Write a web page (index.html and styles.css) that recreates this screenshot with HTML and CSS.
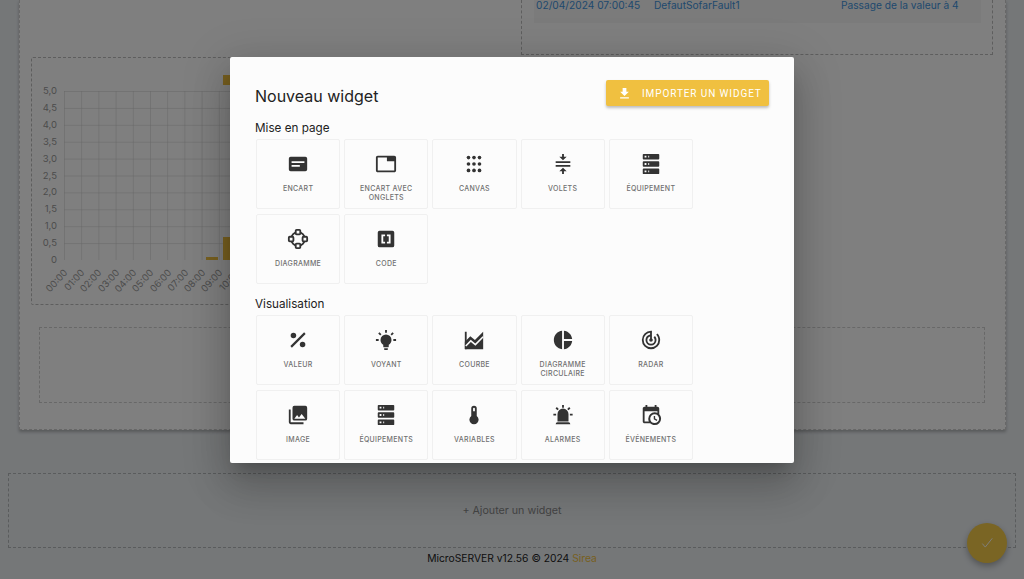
FILE: index.html
```html
<!DOCTYPE html>
<html lang="fr">
<head>
  <meta charset="UTF-8">
  <title>MicroSERVER</title>
  <link rel="stylesheet" href="styles.css">
</head>
<body>
  <div class="dashboard">
    <div class="panel">
      <div class="panel-row">
        <div class="chart-col">
          <div class="widget chart-box">
            <svg class="chart" width="480" height="246" viewBox="0 0 480 246">
              <defs>
                <pattern id="grid" x="32" y="33" width="17.2" height="16.9" patternUnits="userSpaceOnUse">
                  <path d="M0 0H17.2M0 0V16.9" fill="none" stroke="#cfcfcf" stroke-width="1"/>
                </pattern>
              </defs>
              <rect x="32" y="33" width="206" height="169" fill="url(#grid)"/>
              <rect x="174" y="199" width="12" height="3" fill="#f0c040"/>
              <rect x="191" y="179" width="12" height="23" fill="#f0c040"/>
              <rect x="191" y="17" width="12" height="10" fill="#f0c040"/>
              <g class="y-labels" text-anchor="end">
                <text x="25" y="36">5,0</text>
                <text x="25" y="53">4,5</text>
                <text x="25" y="70">4,0</text>
                <text x="25" y="87">3,5</text>
                <text x="25" y="104">3,0</text>
                <text x="25" y="121">2,5</text>
                <text x="25" y="137">2,0</text>
                <text x="25" y="154">1,5</text>
                <text x="25" y="171">1,0</text>
                <text x="25" y="188">0,5</text>
                <text x="25" y="205">0</text>
              </g>
              <g class="x-labels" text-anchor="end">
                <text transform="translate(36 215) rotate(-48)">00:00</text>
                <text transform="translate(53 215) rotate(-48)">01:00</text>
                <text transform="translate(70 215) rotate(-48)">02:00</text>
                <text transform="translate(88 215) rotate(-48)">03:00</text>
                <text transform="translate(105 215) rotate(-48)">04:00</text>
                <text transform="translate(122 215) rotate(-48)">05:00</text>
                <text transform="translate(140 215) rotate(-48)">06:00</text>
                <text transform="translate(157 215) rotate(-48)">07:00</text>
                <text transform="translate(174 215) rotate(-48)">08:00</text>
                <text transform="translate(191 215) rotate(-48)">09:00</text>
                <text transform="translate(208 215) rotate(-48)">10:00</text>
              </g>
            </svg>
          </div>
        </div>
        <div class="events-col">
          <div class="widget events-box">
            <div class="event-row">
              <span class="event-date">02/04/2024 07:00:45</span>
              <span class="event-name">DefautSofarFault1</span>
              <span class="event-msg">Passage de la valeur à 4</span>
            </div>
          </div>
        </div>
      </div>
      <div class="widget empty-row"></div>
    </div>

    <div class="add-widget">+ Ajouter un widget</div>
    <div class="footer">MicroSERVER v12.56 © 2024 <span class="brand">Sirea</span></div>
  </div>

  <button class="fab">
    <svg width="14" height="14" viewBox="0 0 24 24"><path d="M4 13l5 6L21 4" fill="none" stroke="#fff" stroke-width="1.6"/></svg>
  </button>

  <div class="overlay">
    <div class="modal">
      <div class="modal-head">
        <h1 class="modal-title">Nouveau widget</h1>
        <button class="import-btn">
          <svg width="15" height="15" viewBox="0 0 24 24"><path fill="#fff" d="M19 9h-4V3H9v6H5l7 7 7-7zM5 18v2h14v-2H5z"/></svg>
          <span>IMPORTER UN WIDGET</span>
        </button>
      </div>

      <h2 class="section-title first">Mise en page</h2>
      <div class="tiles">
        <div class="tile">
          <svg class="icon" viewBox="0 0 24 24"><path d="M20 4H4a2 2 0 0 0-2 2v12a2 2 0 0 0 2 2h16a2 2 0 0 0 2-2V6a2 2 0 0 0-2-2zM5 9h14v2H5zm0 4h9v2H5z" fill-rule="evenodd"/></svg>
          <span>Encart</span>
        </div>
        <div class="tile">
          <svg class="icon" viewBox="0 0 24 24"><path d="M21 3H3c-1.1 0-2 .9-2 2v14c0 1.1.9 2 2 2h18c1.100 0 2-.9 2-2V5c0-1.100-.9-2-2-2zm0 16H3V5h10v4h8v10z"/></svg>
          <span>Encart avec onglets</span>
        </div>
        <div class="tile">
          <svg class="icon" viewBox="0 0 24 24"><circle cx="6" cy="5" r="2"/><circle cx="12" cy="5" r="2"/><circle cx="18" cy="5" r="2"/><circle cx="6" cy="12" r="2"/><circle cx="12" cy="12" r="2"/><circle cx="18" cy="12" r="2"/><circle cx="6" cy="19" r="2"/><circle cx="12" cy="19" r="2"/><circle cx="18" cy="19" r="2"/></svg>
          <span>Canvas</span>
        </div>
        <div class="tile">
          <svg class="icon" viewBox="0 0 24 24"><path d="M4 9v2h16V9H4zM16 4h-3V1h-2v3H8l4 4 4-4zM8 20h3v3h2v-3h3l-4-4-4 4zM4 15h16v-2H4v2z"/></svg>
          <span>Volets</span>
        </div>
        <div class="tile">
          <svg class="icon" viewBox="0 0 24 24"><path d="M4,1H20A1,1 0 0,1 21,2V6A1,1 0 0,1 20,7H4A1,1 0 0,1 3,6V2A1,1 0 0,1 4,1M4,9H20A1,1 0 0,1 21,10V14A1,1 0 0,1 20,15H4A1,1 0 0,1 3,14V10A1,1 0 0,1 4,9M4,17H20A1,1 0 0,1 21,18V22A1,1 0 0,1 20,23H4A1,1 0 0,1 3,22V18A1,1 0 0,1 4,17M9,5H10V3H9V5M9,13H10V11H9V13M9,21H10V19H9V21M5,3V5H7V3H5M5,11V13H7V11H5M5,19V21H7V19H5Z"/></svg>
          <span>Équipement</span>
        </div>
        <div class="tile">
          <svg class="icon" viewBox="0 0 24 24"><circle cx="12" cy="12" r="7.500" fill="none" stroke="#333" stroke-width="2"/><g fill="#fafafa" stroke="#333" stroke-width="2"><rect x="9.500" y="2" width="5" height="5" rx="1"/><rect x="9.500" y="17" width="5" height="5" rx="1"/><rect x="2" y="9.500" width="5" height="5" rx="1"/><rect x="17" y="9.500" width="5" height="5" rx="1"/></g></svg>
          <span>Diagramme</span>
        </div>
        <div class="tile">
          <svg class="icon" viewBox="0 0 24 24"><path d="M5 3h14a2 2 0 0 1 2 2v14a2 2 0 0 1-2 2H5a2 2 0 0 1-2-2V5a2 2 0 0 1 2-2zm2 4v10h4v-2H9V9h2V7H7zm10 0h-4v2h2v6h-2v2h4V7z" fill-rule="evenodd"/></svg>
          <span>Code</span>
        </div>
      </div>

      <h2 class="section-title">Visualisation</h2>
      <div class="tiles">
        <div class="tile">
          <svg class="icon" viewBox="0 0 24 24"><circle cx="7" cy="7" r="3"/><circle cx="17" cy="17" r="3"/><path d="M4.500 19.500l15-15" stroke="#333" stroke-width="2.400"/></svg>
          <span>Valeur</span>
        </div>
        <div class="tile">
          <svg class="icon" viewBox="0 0 24 24"><path d="M12,6A6,6 0 0,1 18,12C18,14.22 16.79,16.16 15,17.2V19A1,1 0 0,1 14,20H10A1,1 0 0,1 9,19V17.2C7.21,16.16 6,14.22 6,12A6,6 0 0,1 12,6M14,21V22A1,1 0 0,1 13,23H11A1,1 0 0,1 10,22V21H14M20,11H23V13H20V11M1,11H4V13H1V11M13,1V4H11V1H13M4.92,3.5L7.05,5.64L5.63,7.05L3.5,4.93L4.92,3.5M16.95,5.63L19.07,3.5L20.5,4.93L18.36,7.05L16.95,5.63Z"/></svg>
          <span>Voyant</span>
        </div>
        <div class="tile">
          <svg class="icon" viewBox="0 0 24 24"><path d="M2 3h2v19H2z"/><path d="M2 14l6-6 5 4 9-9v19H2z"/><path d="M3 18.500l5.500-5.500 5 4 8.500-8.500" fill="none" stroke="#fafafa" stroke-width="1.700"/></svg>
          <span>Courbe</span>
        </div>
        <div class="tile">
          <svg class="icon" viewBox="0 0 24 24"><path d="M11 2v20c-5.070-.5-9-4.790-9-10s3.930-9.500 9-10zm2.030 0v8.990H22c-.47-4.740-4.240-8.520-8.970-8.990zm0 11.010V22c4.740-.47 8.500-4.250 8.970-8.990h-8.970z"/></svg>
          <span>Diagramme circulaire</span>
        </div>
        <div class="tile">
          <svg class="icon" viewBox="0 0 24 24"><path d="M19.07,4.93L17.66,6.34C19.1,7.79 20,9.79 20,12A8,8 0 0,1 12,20A8,8 0 0,1 4,12C4,7.92 7.05,4.56 11,4.07V6.09C8.16,6.57 6,9.03 6,12A6,6 0 0,0 12,18A6,6 0 0,0 18,12C18,10.34 17.33,8.84 16.24,7.76L14.83,9.17C15.55,9.9 16,10.9 16,12A4,4 0 0,1 12,16A4,4 0 0,1 8,12C8,10.14 9.28,8.59 11,8.14V10.28C10.4,10.63 10,11.26 10,12A2,2 0 0,0 12,14A2,2 0 0,0 14,12C14,11.26 13.6,10.62 13,10.28V2H12A10,10 0 0,0 2,12A10,10 0 0,0 12,22A10,10 0 0,0 22,12C22,9.24 20.88,6.74 19.07,4.93Z"/></svg>
          <span>Radar</span>
        </div>
        <div class="tile">
          <svg class="icon" viewBox="0 0 24 24"><path d="M22,16V4A2,2 0 0,0 20,2H8A2,2 0 0,0 6,4V16A2,2 0 0,0 8,18H20A2,2 0 0,0 22,16M11,12L13.03,14.71L16,11L20,16H8M2,6V20A2,2 0 0,0 4,22H18V20H4V6"/></svg>
          <span>Image</span>
        </div>
        <div class="tile">
          <svg class="icon" viewBox="0 0 24 24"><path d="M4,1H20A1,1 0 0,1 21,2V6A1,1 0 0,1 20,7H4A1,1 0 0,1 3,6V2A1,1 0 0,1 4,1M4,9H20A1,1 0 0,1 21,10V14A1,1 0 0,1 20,15H4A1,1 0 0,1 3,14V10A1,1 0 0,1 4,9M4,17H20A1,1 0 0,1 21,18V22A1,1 0 0,1 20,23H4A1,1 0 0,1 3,22V18A1,1 0 0,1 4,17M9,5H10V3H9V5M9,13H10V11H9V13M9,21H10V19H9V21M5,3V5H7V3H5M5,11V13H7V11H5M5,19V21H7V19H5Z"/></svg>
          <span>Équipements</span>
        </div>
        <div class="tile">
          <svg class="icon" viewBox="0 0 24 24"><path d="M15 13V5A3 3 0 0 0 9 5V13A5 5 0 1 0 15 13M12 4A1 1 0 0 1 13 5V8H11V5A1 1 0 0 1 12 4Z"/></svg>
          <span>Variables</span>
        </div>
        <div class="tile">
          <svg class="icon" viewBox="0 0 24 24"><path d="M6,6.9L3.87,4.78L5.28,3.37L7.4,5.5L6,6.9M13,1V4H11V1H13M20.13,4.78L18,6.9L16.6,5.5L18.72,3.37L20.13,4.78M4.5,10.5V12.5H1.5V10.5H4.5M19.5,10.5H22.5V12.5H19.5V10.5M6,20H18A2,2 0 0,1 20,22H4A2,2 0 0,1 6,20M12,5A6,6 0 0,1 18,11V19H6V11A6,6 0 0,1 12,5Z"/></svg>
          <span>Alarmes</span>
        </div>
        <div class="tile">
          <svg class="icon" viewBox="0 0 24 24"><path d="M15,13H16.5V15.82L18.94,17.23L18.19,18.53L15,16.69V13M19,8H5V19H9.67C9.24,18.09 9,17.07 9,16A7,7 0 0,1 16,9C17.07,9 18.09,9.24 19,9.67V8M5,21C3.89,21 3,20.1 3,19V5C3,3.89 3.89,3 5,3H6V1H8V3H16V1H18V3H19A2,2 0 0,1 21,5V11.1C22.24,12.36 23,14.09 23,16A7,7 0 0,1 16,23C14.09,23 12.36,22.24 11.1,21H5M16,11.15A4.85,4.85 0 0,0 11.15,16C11.15,18.68 13.32,20.85 16,20.85A4.85,4.85 0 0,0 20.85,16C20.85,13.32 18.68,11.15 16,11.15Z"/></svg>
          <span>Événements</span>
        </div>
      </div>
    </div>
  </div>
</body>
</html>
```

FILE: styles.css
```css
html, body {
  height: 100%;
  margin: 0;
}

body {
  font-family: Inter, "Liberation Sans", sans-serif;
  background: #eaeef1;
  color: #222;
  overflow: hidden;
  position: relative;
}

.dashboard {
  display: flex;
  flex-direction: column;
  align-items: center;
}

.panel {
  width: 987px;
  height: 430px;
  box-sizing: border-box;
  margin-left: 1px;
  padding: 0 12px 0 11px;
  background: #fff;
  border: 1px dashed #cfcfcf;
  border-top: 0;
  box-shadow: 0 2px 3px rgba(0, 0, 0, 0.25);
  display: flex;
  flex-direction: column;
}

.widget {
  border: 1px dashed #bdbdbd;
  box-sizing: border-box;
}

.panel-row {
  display: flex;
  gap: 11px;
  height: 305px;
}

.chart-col {
  width: 479px;
  padding-top: 57px;
  box-sizing: border-box;
}

.chart-box {
  height: 248px;
  border-radius: 2px;
}

.chart {
  display: block;
}

.chart text {
  font-size: 9.5px;
  fill: #999;
}

.events-col {
  flex: 1;
}

.events-box {
  height: 55px;
  border-top: 0;
  padding: 0 12px;
}

.event-row {
  height: 23px;
  box-sizing: border-box;
  margin-right: -1px;
  background: #f6f6f6;
  padding: 0 4px 0 2px;
  display: flex;
  font-size: 10.2px;
  line-height: 11px;
  color: #3f93dc;
}

.event-date {
  width: 118px;
}

.event-name {
  width: 187px;
}

.empty-row {
  height: 76px;
  margin: 22px 8px 0;
  border-color: #d0d0d0;
}

.add-widget {
  width: 1008px;
  height: 75px;
  box-sizing: border-box;
  margin-top: 43px;
  border: 1px dashed #b5b8bb;
  display: flex;
  align-items: center;
  justify-content: center;
  font-size: 10.7px;
  color: #888;
}

.footer {
  margin-top: 3px;
  font-size: 10.3px;
  line-height: 14px;
  color: #222;
}

.brand {
  color: #f0c040;
}

.fab {
  position: absolute;
  left: 967px;
  top: 523px;
  width: 40px;
  height: 40px;
  border: 0;
  border-radius: 50%;
  background: #f4ca48;
  box-shadow: 0 3px 6px rgba(0, 0, 0, 0.3);
  display: flex;
  align-items: center;
  justify-content: center;
  padding: 0;
}

.overlay {
  position: absolute;
  inset: 0;
  background: rgba(0, 0, 0, 0.5);
  display: flex;
  justify-content: center;
  align-items: flex-start;
  padding-top: 57px;
  box-sizing: border-box;
}

.modal {
  width: 564px;
  height: 406px;
  box-sizing: border-box;
  overflow: hidden;
  padding: 23px 25px 0;
  background: #fcfcfc;
  border-radius: 2px;
  box-shadow: 0 11px 15px -7px rgba(0, 0, 0, 0.2), 0 24px 38px 3px rgba(0, 0, 0, 0.14), 0 9px 46px 8px rgba(0, 0, 0, 0.12);
}

.modal-head {
  display: flex;
  justify-content: space-between;
  align-items: flex-start;
  height: 33px;
}

.modal-title {
  margin: 6px 0 0;
  font-size: 16px;
  line-height: 20px;
  font-weight: 400;
  color: #222;
}

.import-btn {
  width: 163px;
  height: 26px;
  border: 0;
  border-radius: 2px;
  background: #f0c040;
  color: #fff;
  box-shadow: 0 2px 3px rgba(0, 0, 0, 0.25);
  display: flex;
  align-items: center;
  gap: 10px;
  padding: 0 0 0 11px;
  font-family: Roboto, sans-serif;
  font-size: 10px;
  font-weight: 400;
  letter-spacing: 0.9px;
  white-space: nowrap;
}

.section-title {
  margin: 0;
  padding: 12px 0 3px;
  font-size: 11.7px;
  line-height: 16px;
  font-weight: 400;
  color: #222;
}

.section-title.first {
  padding-top: 7px;
}

.tiles {
  display: flex;
  flex-wrap: wrap;
  gap: 5px 4px;
  margin-left: 1px;
}

.tile {
  width: 84.2px;
  height: 70px;
  box-sizing: border-box;
  border: 1px solid #f0f0f0;
  border-radius: 2px;
  padding: 13px 6px 0;
  display: flex;
  flex-direction: column;
  align-items: center;
  gap: 9px;
  text-align: center;
  font-size: 7px;
  line-height: 9px;
  letter-spacing: 0.3px;
  font-weight: 500;
  text-transform: uppercase;
  color: #707070;
}

.icon {
  width: 22px;
  height: 22px;
  flex: none;
  fill: #333;
}
```
